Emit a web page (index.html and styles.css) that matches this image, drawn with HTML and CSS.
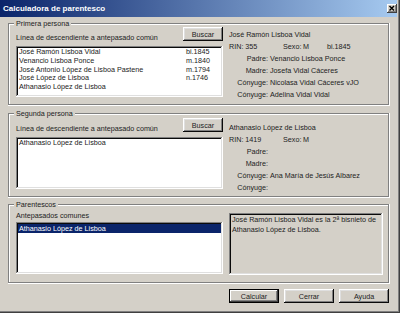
FILE: index.html
```html
<!DOCTYPE html>
<html>
<head>
    <meta charset="utf-8">
    <title>Calculadora de parentesco</title>
    <link rel="stylesheet" href="styles.css">
</head>
<body>
    <div class="window">
        <div class="titlebar">
            <span class="title">Calculadora de parentesco</span>
            <span class="close">
                <svg width="10" height="9" viewBox="0 0 10 9">
                    <path d="M2.5 2 L7 6.5 M7 2 L2.5 6.5" stroke="#000" stroke-width="1.4" fill="none"/>
                </svg>
            </span>
        </div>
        <div class="dialog">
            <!-- first person -->
            <div class="group group-first">
                <span class="group-title">Primera persona</span>
                <div class="pick">
                    <div class="pick-head">
                        <span class="pick-label">Línea de descendiente a antepasado común</span>
                        <button class="btn btn-search">Buscar</button>
                    </div>
                    <div class="list list-first">
                        <div class="row"><span>José Ramón Lisboa Vidal</span><span>bi.1845</span></div>
                        <div class="row"><span>Venancio Lisboa Ponce</span><span>m.1840</span></div>
                        <div class="row"><span>José Antonio López de Lisboa Pastene</span><span>m.1794</span></div>
                        <div class="row"><span>José López de Lisboa</span><span>n.1746</span></div>
                        <div class="row"><span>Athanasio López de Lisboa</span><span></span></div>
                    </div>
                </div>
                <div class="info info-first">
                    <div class="info-name">José Ramón Lisboa Vidal</div>
                    <div class="info-rin"><span class="rin">RIN: 355</span><span class="sex">Sexo:</span><span class="sex-val">M</span><span>bi.1845</span></div>
                    <div class="info-row"><span class="info-label">Padre:</span><span>Venancio Lisboa Ponce</span></div>
                    <div class="info-row"><span class="info-label">Madre:</span><span>Josefa Vidal Cáceres</span></div>
                    <div class="info-row"><span class="info-label">Cónyuge:</span><span>Nicolasa Vidal Cáceres vJO</span></div>
                    <div class="info-row"><span class="info-label">Cónyuge:</span><span>Adelina Vidal Vidal</span></div>
                </div>
            </div>

            <!-- second person -->
            <div class="group group-second">
                <span class="group-title">Segunda persona</span>
                <div class="pick">
                    <div class="pick-head">
                        <span class="pick-label">Línea de descendiente a antepasado común</span>
                        <button class="btn btn-search">Buscar</button>
                    </div>
                    <div class="list list-second">
                        <div class="row"><span>Athanasio López de Lisboa</span><span></span></div>
                    </div>
                </div>
                <div class="info info-second">
                    <div class="info-name">Athanasio López de Lisboa</div>
                    <div class="info-rin"><span class="rin">RIN: 1419</span><span class="sex">Sexo:</span><span class="sex-val">M</span></div>
                    <div class="info-row"><span class="info-label">Padre:</span><span></span></div>
                    <div class="info-row"><span class="info-label">Madre:</span><span></span></div>
                    <div class="info-row"><span class="info-label">Cónyuge:</span><span>Ana María de Jesús Albarez</span></div>
                    <div class="info-row"><span class="info-label">Cónyuge:</span><span></span></div>
                </div>
            </div>

            <!-- relationship -->
            <div class="group group-rel">
                <span class="group-title">Parentescos</span>
                <div class="common">
                    <div class="common-label">Antepasados comunes</div>
                    <div class="list list-common">
                        <div class="row-selected">Athanasio López de Lisboa</div>
                    </div>
                </div>
                <div class="result">José Ramón Lisboa Vidal es la 2ª bisnieto de Athanasio López de Lisboa.</div>
            </div>

            <div class="actions">
                <button class="btn btn-action btn-default">Calcular</button>
                <button class="btn btn-action">Cerrar</button>
                <button class="btn btn-action">Ayuda</button>
            </div>
        </div>
    </div>
</body>
</html>
```

FILE: styles.css
```css
body {
    margin: 0;
    padding: 0;
    background-color: #d4d0c8;
    font-family: 'Liberation Sans', Arial, sans-serif;
    font-size: 7.2px;
    color: #222;
}

.window {
    width: 400px;
    height: 313px;
    box-sizing: border-box;
    border-right: 1px solid #404040;
    border-bottom: 1px solid #404040;
    padding: 0 2px 2px 0;
    background-color: #d4d0c8;
    box-shadow: inset -1px -1px #808080;
    display: flex;
    flex-direction: column;
}

.titlebar {
    height: 17px;
    display: flex;
    align-items: center;
    padding-left: 3px;
    background: linear-gradient(to right, #0a246a, #a6caf0);
}

.title {
    color: #fff;
    font-weight: bold;
    font-size: 8px;
    line-height: 10px;
}

.close {
    margin-left: auto;
    width: 10px;
    height: 9px;
    display: flex;
    background-color: #d4d0c8;
    box-shadow: inset -1px -1px #404040, inset 1px 1px #fff, inset -2px -2px #808080;
}

.dialog {
    flex: 1;
    padding: 6px 7px 0 8px;
}

/* group boxes */
.group {
    position: relative;
    box-sizing: border-box;
    display: grid;
    grid-template-columns: 207px 1fr;
    column-gap: 6px;
    padding: 0 4px 0 8px;
    box-shadow: inset -1px -1px #fff, inset -2px 1px #808080, inset 1px -2px #808080, inset 2px 2px #fff;
}

.group-title {
    position: absolute;
    top: -4px;
    left: 6px;
    padding: 0 2px;
    line-height: 10px;
    background-color: #d4d0c8;
}

.group-first {
    height: 83px;
    padding-top: 4px;
}

.group-second {
    height: 85px;
    margin-top: 7px;
    padding-top: 5px;
}

.group-rel {
    height: 80px;
    margin-top: 6px;
    padding-top: 7px;
    grid-template-columns: 207px 154px;
}

.pick {
    display: flex;
    flex-direction: column;
}

.pick-head {
    height: 14px;
    display: flex;
    justify-content: space-between;
    align-items: flex-end;
}

.pick-label {
    line-height: 10px;
    margin-bottom: -2px;
}

/* buttons */
.btn {
    padding: 0;
    border: none;
    font-family: 'Liberation Sans', Arial, sans-serif;
    font-size: 7.2px;
    color: #222;
    background-color: #d4d0c8;
    box-shadow: inset -1px -1px #0a0a0a, inset 1px 1px #fff, inset -2px -2px #808080, inset 2px 2px #dfdfdf;
}

.btn-search {
    width: 40px;
    height: 14px;
}

.btn-action {
    width: 50px;
    height: 14px;
}

.btn-default {
    border: 1px solid #000;
    box-shadow: inset -1px -1px #404040, inset 1px 1px #fff, inset -2px -2px #808080;
}

/* list boxes */
.list {
    box-sizing: border-box;
    padding: 2px 3px;
    background-color: #fff;
    box-shadow: inset -1px -1px #fff, inset 1px 1px #808080, inset -2px -2px #dfdfdf, inset 2px 2px #0a0a0a;
    line-height: 8.75px;
}

.list-first {
    height: 51px;
    margin-top: 5px;
}

.list-second {
    height: 52px;
    margin-top: 5px;
}

.row {
    display: grid;
    grid-template-columns: 167px auto;
    white-space: nowrap;
}

/* person details */
.info {
    line-height: 12px;
    white-space: nowrap;
}

.info-first {
    padding-top: 2px;
}

.info-second {
    padding-top: 4px;
}

.info-rin {
    display: flex;
}

.rin {
    width: 54px;
}

.sex {
    width: 20px;
}

.sex-val {
    width: 24px;
}

.info-row {
    display: grid;
    grid-template-columns: 39px auto;
    column-gap: 2px;
}

.info-label {
    text-align: right;
}

/* relationship */
.common-label {
    line-height: 10px;
}

.list-common {
    height: 52px;
    margin-top: 1px;
    padding: 2px;
}

.row-selected {
    height: 9px;
    line-height: 9px;
    padding-left: 1px;
    color: #fff;
    background-color: #0a246a;
}

.result {
    height: 62px;
    margin-top: 2px;
    box-sizing: border-box;
    padding: 2px 3px;
    line-height: 9.5px;
    box-shadow: inset -1px -1px #fff, inset 1px 1px #808080, inset -2px -2px #dfdfdf, inset 2px 2px #0a0a0a;
}

.actions {
    display: flex;
    justify-content: flex-end;
    gap: 5px;
    margin-top: 5px;
    margin-right: 1px;
}
```
